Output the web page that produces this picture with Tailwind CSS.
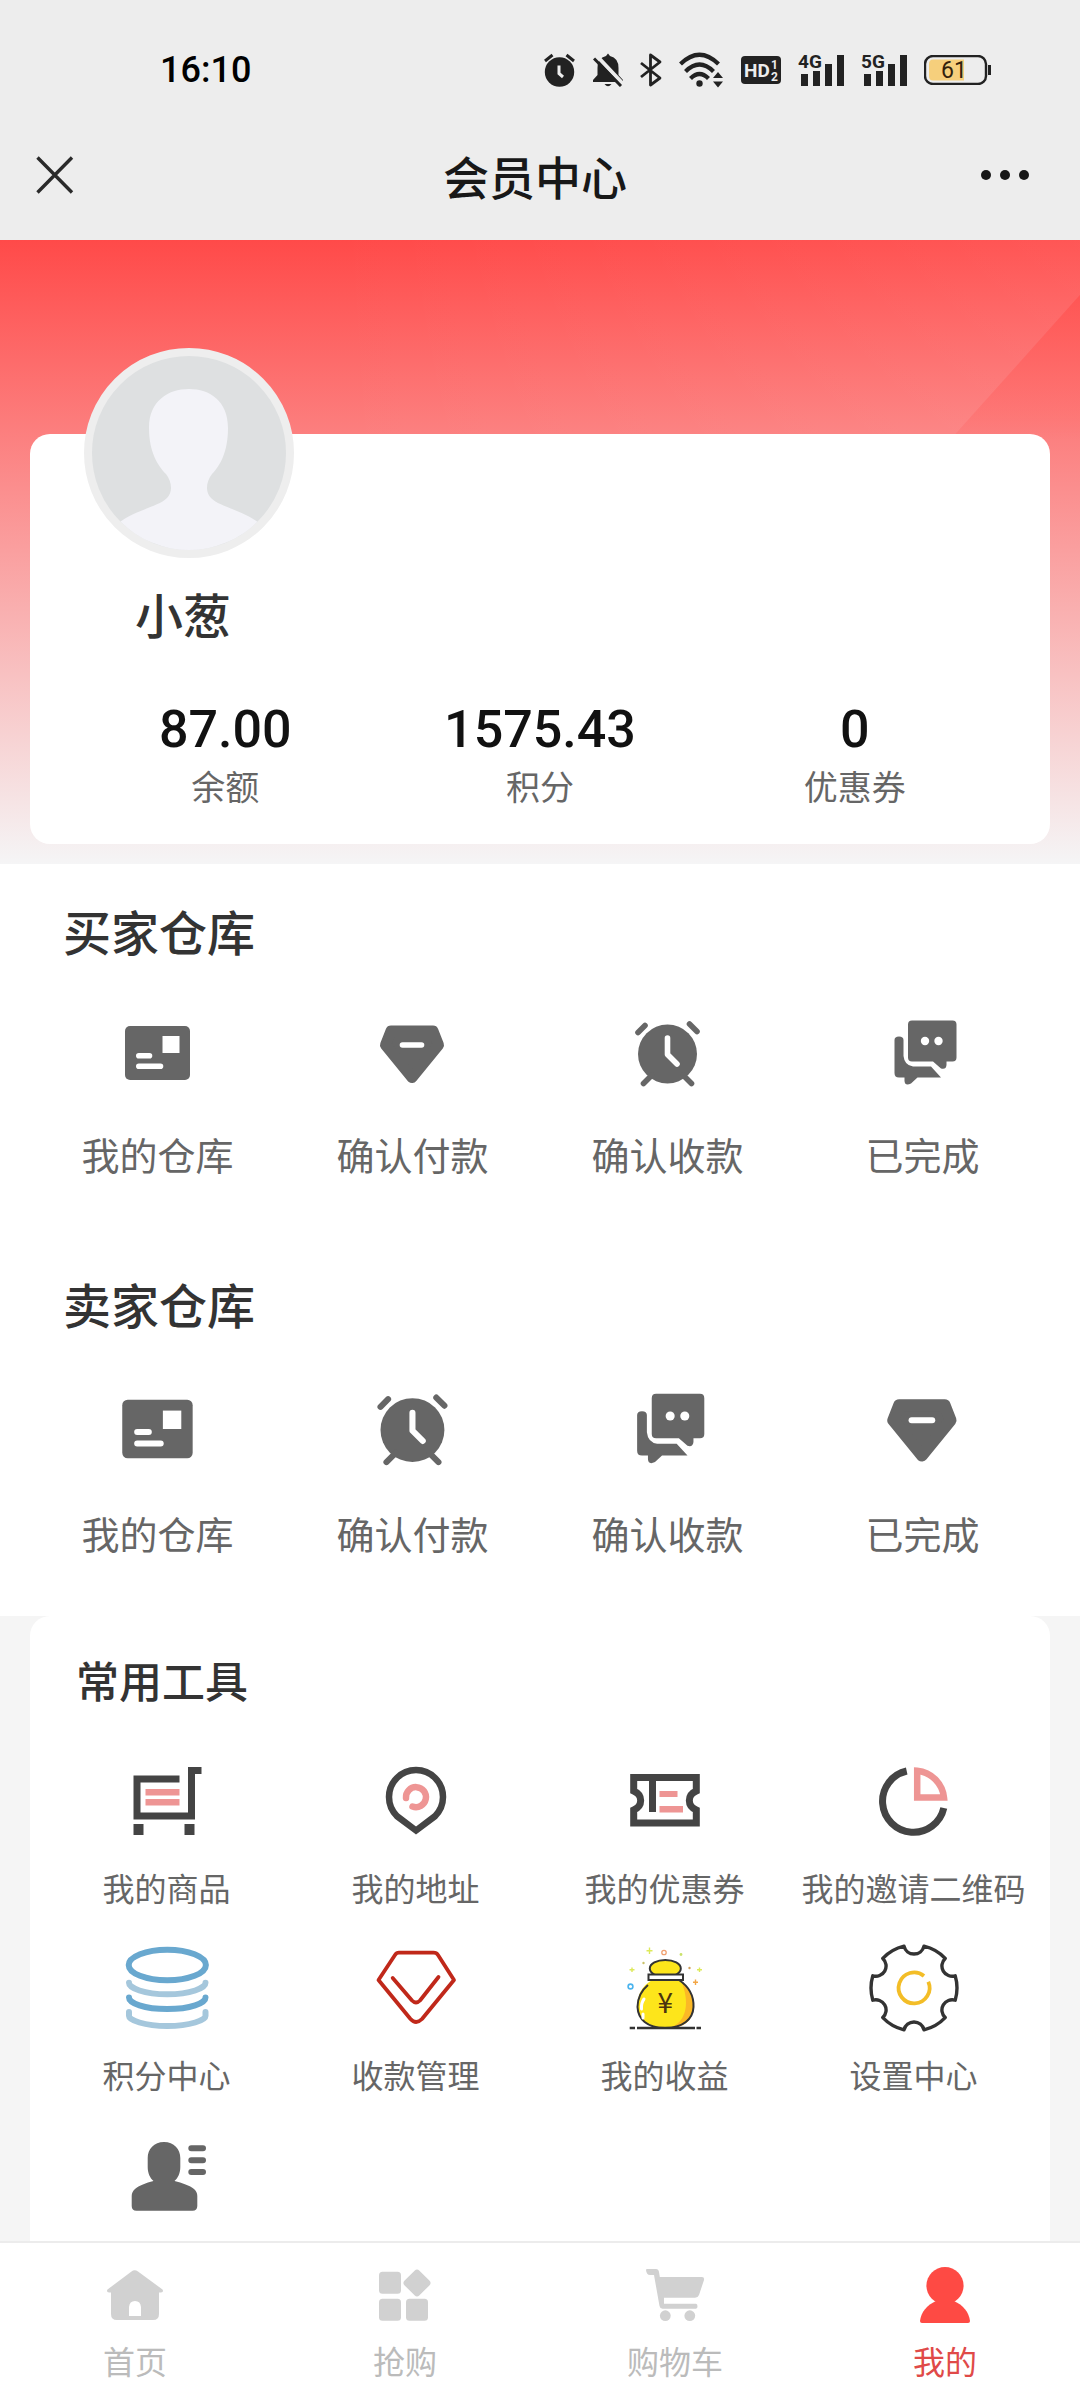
<!DOCTYPE html>
<html lang="zh-CN">
<head>
<meta charset="utf-8">
<meta name="viewport" content="width=device-width, initial-scale=1">
<title>会员中心</title>
<script src="https://cdn.jsdelivr.net/npm/@tailwindcss/browser@4"></script>
</head>
<body class="flex min-h-screen flex-col bg-white font-['Noto_Sans_CJK_SC',sans-serif] text-[#666]">

<!-- Shared icons -->
<svg class="hidden" aria-hidden="true">
  <symbol id="i-card" viewBox="0 0 72 72">
    <rect x="3" y="9" width="65" height="54" rx="5" fill="#666"/>
    <path d="M40.500 19h17v17h-17z" fill="#fff"/>
    <path d="M16.800 38.800H27.500M16.800 49.300H38.500" stroke="#fff" stroke-width="5.600" stroke-linecap="round"/>
  </symbol>
  <symbol id="i-gem" viewBox="0 0 72 72">
    <path d="M14 14H56L61.500 28L35 60.500L8.500 28Z" fill="#666" stroke="#666" stroke-width="11" stroke-linejoin="round"/>
    <path d="M25.500 28H44.500" stroke="#fff" stroke-width="5.600" stroke-linecap="round"/>
  </symbol>
  <symbol id="i-clock" viewBox="0 0 72 72">
    <circle cx="35.500" cy="37" r="29.500" fill="#666"/>
    <g fill="none" stroke="#666" stroke-width="5.600" stroke-linecap="round"><path d="M6 15.500L13 8.500M57.500 7L65 14.500M11.500 66.500L20 58M59.500 66.500L51 58"/></g>
    <path d="M35.500 21V37.500L45 47" fill="none" stroke="#fff" stroke-width="5.600" stroke-linecap="round" stroke-linejoin="round"/>
  </symbol>
  <symbol id="i-chat" viewBox="0 0 72 72">
    <path d="M25 3.500H65.500Q69.500 3.500 69.500 7.500V40.500Q69.500 44.500 65.500 44.500H59.500V48Q59 53 54 51.500L46 44.500H25Q21 44.500 21 40.500V7.500Q21 3.500 25 3.500Z" fill="#666"/>
    <circle cx="38" cy="24" r="4.200" fill="#fff"/><circle cx="51.500" cy="24" r="4.200" fill="#fff"/>
    <path d="M7.500 23Q7.500 19.500 12 19.500T16.500 23V39Q17.500 48.500 26 49.500H44L54 60.500H30.500L24 66.500Q18 69.500 17.500 64V60.500H12Q7.500 60.500 7.500 56Z" fill="#666"/>
  </symbol>
</svg>

<header class="bg-[#ededed] text-black">
  <div class="flex h-[126px] items-center justify-between pt-[14px] pr-[89px] pl-[160px]">
    <time class="font-['Roboto',sans-serif] text-[36px] font-medium">16:10</time>
    <div class="flex items-center gap-[17px]">
      <svg class="h-[34px] w-[32px]" viewBox="0 0 32 34" role="img" aria-label="闹钟"><circle cx="15.500" cy="19" r="14.700" fill="#222"/><path d="M1 8L8.500 2M30 8L22.500 2" stroke="#222" stroke-width="3"/><path d="M15 12.500V20.500L19 24" fill="none" stroke="#ededed" stroke-width="3"/></svg>
      <svg class="h-[34px] w-[30px]" viewBox="0 0 30 34" role="img" aria-label="静音"><path d="M15 0.500L17 3Q25.500 5 25.500 15V22L30 27V29H0V27L4.500 22V15Q4.500 5 13 3Z" fill="#222"/><path d="M11.500 31H18.500Q15 35.500 11.500 31Z" fill="#222"/><path d="M3 2L31 32" stroke="#ededed" stroke-width="4"/><path d="M1 5.500L28 33" stroke="#222" stroke-width="3"/></svg>
      <svg class="h-[34px] w-[22px]" viewBox="0 0 22 34" role="img" aria-label="蓝牙"><path d="M1 10L20 25L10.500 32V2L20 9L1 24" fill="none" stroke="#222" stroke-width="2.800" stroke-linejoin="round"/></svg>
      <svg class="h-[36px] w-[45px]" viewBox="0 0 45 36" role="img" aria-label="无线网络"><g fill="none" stroke="#222" stroke-width="4.200"><path d="M1.500 12Q20.500 -6.500 39.500 12M6.500 19.500Q20.500 5.500 34.500 19.500M11.500 26.500Q20.500 17.500 29.500 26.500"/></g><circle cx="20.500" cy="31.500" r="3.200" fill="#222"/><path d="M34 26L39 20L44 26ZM34 29.500H44L39 35.500Z" fill="#222"/></svg>
      <svg class="h-[28px] w-[40px]" viewBox="0 0 40 28"><rect width="40" height="28" rx="4" fill="#222"/><g fill="#ededed" font-family="Roboto" font-weight="700"><text x="3" y="21" font-size="19">HD</text><text x="30" y="13" font-size="12">1</text><text x="30" y="25" font-size="12">2</text></g></svg>
      <svg class="h-[46px] w-[46px]" viewBox="0 -6 46 46"><text x="0" y="15" font-family="Roboto" font-weight="700" font-size="19" fill="#222">4G</text><path d="M3 21h7v12H3zM15 18h7v15h-7zM27 11h7v22h-7zM39 2h7v31h-7z" fill="#222"/></svg>
      <svg class="h-[46px] w-[46px]" viewBox="0 -6 46 46"><text x="0" y="15" font-family="Roboto" font-weight="700" font-size="19" fill="#222">5G</text><path d="M3 21h7v12H3zM15 18h7v15h-7zM27 11h7v22h-7zM39 2h7v31h-7z" fill="#222"/></svg>
      <svg class="h-[30px] w-[67px]" viewBox="0 0 67 30"><rect x="1" y="1" width="61" height="28" rx="8" fill="none" stroke="#222" stroke-width="2.400"/><path d="M9 4.500H40V25.500H9Q5 25.500 5 21V9Q5 4.500 9 4.500Z" fill="#f6cf7c"/><path d="M64 10h3v10h-3z" fill="#222"/><text x="30" y="23" text-anchor="middle" font-family="Roboto" font-size="23" fill="#33220c">61</text></svg>
    </div>
  </div>
  <div class="grid h-[114px] grid-cols-[1fr_auto_1fr] items-center pr-[46px] pb-4 pl-[36px]">
    <button type="button" aria-label="关闭"><svg class="size-[38px]" viewBox="0 0 38 38"><path d="M1.500 1.500L36 36.500M36 1.500L1.500 36.500" stroke="#2a2a2a" stroke-width="3.400"/></svg></button>
    <h1 class="text-[46px] leading-none font-medium text-[#181818]">会员中心</h1>
    <button type="button" aria-label="更多" class="justify-self-end pr-1"><svg class="h-3 w-[50px]" viewBox="0 0 50 12"><circle cx="6" cy="6" r="5" fill="#181818"/><circle cx="25" cy="6" r="5" fill="#181818"/><circle cx="44" cy="6" r="5" fill="#181818"/></svg></button>
  </div>
</header>

<main class="flex grow flex-col">
  <section class="relative bg-linear-to-b/srgb from-[#ff4a49] to-[#f5f5f6] px-[30px] pt-[194px] pb-5">
    <svg class="absolute inset-x-0 top-0 h-[200px] w-full" viewBox="0 0 1080 200" preserveAspectRatio="none" aria-hidden="true">
      <defs>
        <linearGradient id="glow" x1="0.300" x2="1"><stop offset="0" stop-color="#fff" stop-opacity="0"/><stop offset="1" stop-color="#fff" stop-opacity="0.070"/></linearGradient>
        <linearGradient id="fold" x1="0" y1="1" x2="0" y2="0"><stop offset="0" stop-color="#ff6e6c" stop-opacity="0"/><stop offset="0.200" stop-color="#ff6e6c" stop-opacity="0.400"/><stop offset="1" stop-color="#ff5553"/></linearGradient>
      </defs>
      <path d="M0 0H1080V55L950 200H0Z" fill="url(#glow)"/>
      <path d="M1080 55V200H950Z" fill="url(#fold)" fill-opacity="0.800"/>
    </svg>
    <div class="relative rounded-[20px] bg-white pt-[149px] pb-[33px]">
      <div class="absolute -top-[86px] left-[54px] size-[210px] overflow-hidden rounded-full border-8 border-[#eeeeee] bg-[#dee0e1]">
        <svg class="size-full" viewBox="0 0 194 194" role="img" aria-label="头像"><path d="M97 33C118 33 136 45 136 72C136 96 128 110 120 118C114 126 113 136 119 142C128 151 148 153 169 168V194H25V168C45 153 66 151 75 142C81 136 80 126 74 118C66 110 57 96 57 72C57 45 76 33 97 33Z" fill="#f3f3f8"/></svg>
      </div>
      <h2 class="pl-[105px] text-[48px] leading-[60px] font-medium text-[#333]">小葱</h2>
      <dl class="mx-[38px] mt-14 grid grid-cols-3 text-center">
        <div class="flex flex-col-reverse"><dt class="text-[34px] leading-[50px]">余额</dt><dd class="font-['Roboto',sans-serif] text-[52px] leading-[62px] font-medium text-[#111]">87.00</dd></div>
        <div class="flex flex-col-reverse"><dt class="text-[34px] leading-[50px]">积分</dt><dd class="font-['Roboto',sans-serif] text-[52px] leading-[62px] font-medium text-[#111]">1575.43</dd></div>
        <div class="flex flex-col-reverse"><dt class="text-[34px] leading-[50px]">优惠券</dt><dd class="font-['Roboto',sans-serif] text-[52px] leading-[62px] font-medium text-[#111]">0</dd></div>
      </dl>
    </div>
  </section>

  <section class="px-[30px] pt-9 pb-[58px]">
    <h2 class="pl-[33px] text-[48px] leading-[60px] font-medium text-[#333]">买家仓库</h2>
    <div class="mt-[57px] grid grid-cols-4 text-[38px] leading-[50px]">
      <a href="#" class="flex flex-col items-center gap-10"><svg class="size-[72px]"><use href="#i-card"/></svg>我的仓库</a>
      <a href="#" class="flex flex-col items-center gap-10"><svg class="size-[72px]"><use href="#i-gem"/></svg>确认付款</a>
      <a href="#" class="flex flex-col items-center gap-10"><svg class="size-[72px]"><use href="#i-clock"/></svg>确认收款</a>
      <a href="#" class="flex flex-col items-center gap-10"><svg class="size-[72px]"><use href="#i-chat"/></svg>已完成</a>
    </div>
  </section>

  <section class="px-[30px] pt-9 pb-[58px]">
    <h2 class="pl-[33px] text-[48px] leading-[60px] font-medium text-[#333]">卖家仓库</h2>
    <div class="mt-[57px] grid grid-cols-4 text-[38px] leading-[50px]">
      <a href="#" class="flex flex-col items-center gap-10"><svg class="size-[78px]"><use href="#i-card"/></svg>我的仓库</a>
      <a href="#" class="flex flex-col items-center gap-10"><svg class="size-[78px]"><use href="#i-clock"/></svg>确认付款</a>
      <a href="#" class="flex flex-col items-center gap-10"><svg class="size-[78px]"><use href="#i-chat"/></svg>确认收款</a>
      <a href="#" class="flex flex-col items-center gap-10"><svg class="size-[78px]"><use href="#i-gem"/></svg>已完成</a>
    </div>
  </section>

  <section class="flex grow flex-col bg-[#f5f5f5] px-[30px]">
    <div class="grow rounded-t-[20px] bg-white px-3 pt-[38px]">
      <h2 class="pl-[34px] text-[43px] leading-[50px] font-medium text-[#333]">常用工具</h2>
      <div class="mt-[52px] grid grid-cols-4 gap-y-9 text-[32px] leading-[40px] whitespace-nowrap">
        <a href="#" class="flex flex-col items-center gap-[21px]">
          <svg class="size-[90px]" viewBox="0 0 90 90"><path d="M57.500 23H15V60H69.500V14.500H79.500" fill="none" stroke="#444" stroke-width="7"/><path d="M11.500 68h10v11h-10zM62.500 68h10v11h-10z" fill="#444"/><path d="M23.500 33h34v6.500h-34zM23.500 43h34v6.500h-34z" fill="#ee9594"/></svg>我的商品</a>
        <a href="#" class="flex flex-col items-center gap-[21px]">
          <svg class="size-[90px]" viewBox="0 0 90 90"><path d="M45 74.500L26 60.200A27 27 0 1 1 64 60.200Z" fill="none" stroke="#444" stroke-width="6.500"/><path d="M35 42A10 10 0 1 1 41.500 50.500" fill="none" stroke="#ee9594" stroke-width="6.500" stroke-linecap="round"/></svg>我的地址</a>
        <a href="#" class="flex flex-col items-center gap-[21px]">
          <svg class="size-[90px]" viewBox="0 0 90 90"><path d="M13.700 21.500H76.300V35C67 39 67 50 76.300 54V67H13.700V54C23 50 23 39 13.700 35Z" fill="none" stroke="#444" stroke-width="7"/><path d="M29 24h7v32h-7z" fill="#444"/><path d="M39.500 35h18v6h-18zM39.500 50h23.500v6.500H39.500z" fill="#ee9594"/></svg>我的优惠券</a>
        <a href="#" class="flex flex-col items-center gap-[21px]">
          <svg class="size-[90px]" viewBox="0 0 90 90"><path d="M37.700 15A31 31 0 1 0 74.800 52" fill="none" stroke="#444" stroke-width="7"/><path d="M48.200 14.800V41.500H75A30 30 0 0 0 48.200 14.800Z" fill="none" stroke="#ee9594" stroke-width="6.500"/></svg>我的邀请二维码</a>
        <a href="#" class="flex flex-col items-center gap-[21px]">
          <svg class="size-[90px]" viewBox="0 0 90 90"><g fill="none" stroke-width="6" stroke-linecap="round"><ellipse cx="45.300" cy="22" rx="38.600" ry="15.300" stroke="#69a8cf"/><path d="M7 39.700C7 45 22 51.300 45.300 51.300S83.500 45 83.500 39.700" stroke="#a5c7dc"/><path d="M7 54.400C7 60 22 66 45.300 66S83.500 60 83.500 54.400" stroke="#69a8cf"/><path d="M7 69V73C7 77 22 83 45.300 83S83.500 77 83.500 73V69" stroke="#a5c7dc"/></g></svg>积分中心</a>
        <a href="#" class="flex flex-col items-center gap-[21px]">
          <svg class="size-[90px]" viewBox="0 0 90 90"><g fill="none" stroke="#c0281a" stroke-width="3.800" stroke-linecap="round" stroke-linejoin="round"><path d="M28 9.700H62.500Q65.500 9.700 67 12L83 37L51 76Q45 82 39.500 76L7.500 37L24 12Q25.500 9.700 28 9.700Z"/><path d="M21.700 35L41 57.500Q45 61.500 49 57.500L67.500 34"/></g></svg>收款管理</a>
        <a href="#" class="flex flex-col items-center gap-[21px]">
          <svg class="size-[90px]" viewBox="0 0 90 90">
            <path d="M32 37C22 43 17 52 17.500 64C18 76 27 85 45 85S73 76 73.500 64C74 52 68 43 59 37Z" fill="#fde51b"/>
            <path d="M62 40C71 47 75 57 73 68C71 80 61 85 50 85C64 80 71 64 62 40Z" fill="#fbb826"/>
            <path d="M28 42C22 47 17.500 54 17.500 64C18 76 27 85 45 85S73 76 73.500 64C74 52 68 43 59 37H33" fill="none" stroke="#333" stroke-width="2"/>
            <path d="M24 56Q21 60 21.500 66M23 71V75" stroke="#fff" stroke-width="3" fill="none" stroke-linecap="round"/>
            <ellipse cx="45.300" cy="25.500" rx="15.500" ry="8.500" fill="#fde51b" stroke="#333" stroke-width="2"/>
            <path d="M28.500 31.500h34.500v5.500H28.500z" fill="#fff" stroke="#333" stroke-width="2"/>
            <text x="45.300" y="70" text-anchor="middle" font-family="Noto Sans CJK SC" font-size="28" fill="#4a3310">¥</text>
            <path d="M9.700 85H15M17 85H75M76.500 85H81" stroke="#333" stroke-width="2.600"/>
            <circle cx="44" cy="9.500" r="2.200" fill="none" stroke="#f0a070" stroke-width="1.300"/><circle cx="10.500" cy="43.500" r="2.400" fill="none" stroke="#4bb4ee" stroke-width="1.600"/>
            <path d="M29.500 4.500V11M26.500 7.700H32.500M12 24.500V29M9.500 26.700H14.500M79.500 24.500V29M77 26.700H82" stroke="#dde95a" stroke-width="1.400"/><path d="M75.500 36.500V42M73 39.200H78" stroke="#f2a545" stroke-width="1.400"/>
            <circle cx="61" cy="11.500" r="1.400" fill="#c9e26a"/><circle cx="23.500" cy="20" r="1.200" fill="#c9c26a"/><circle cx="69.500" cy="25" r="1.200" fill="#d0a05a"/>
          </svg>我的收益</a>
        <a href="#" class="flex flex-col items-center gap-[21px]">
          <svg class="size-[90px]" viewBox="0 0 90 90"><path d="M55 3.200A43 43 0 0 1 76.200 15.400A10.300 10.300 0 0 0 86.200 32.800A43 43 0 0 1 86.200 57.200A10.300 10.300 0 0 0 76.200 74.600A43 43 0 0 1 55 86.800A10.300 10.300 0 0 0 35 86.800A43 43 0 0 1 13.800 74.600A10.300 10.300 0 0 0 3.800 57.200A43 43 0 0 1 3.800 32.800A10.300 10.300 0 0 0 13.800 15.400A43 43 0 0 1 35 3.200A10.300 10.300 0 0 0 55 3.200Z" fill="none" stroke="#333" stroke-width="3.400" stroke-linejoin="round"/><path d="M59.300 38.700A15.500 15.500 0 1 1 55 33" fill="none" stroke="#f3bd27" stroke-width="3.800"/></svg>设置中心</a>
        <a href="#" class="flex flex-col items-center" aria-label="个人资料">
          <svg class="size-[90px]" viewBox="0 0 90 90"><path d="M42 12C52 12 58.300 19 58.300 28V37C58.300 43 56 48 52.500 51C60 53 68 55.500 72 59Q75.300 62 75.300 66V76Q75.300 80.700 70.500 80.700H14.500Q9.700 80.700 9.700 76V66Q9.700 62 13 59C17 55.500 24 53 31.500 51C28 48 25.700 43 25.700 37V28C25.700 19 32 12 42 12Z" fill="#666"/><path d="M69.300 18.300H81M69.300 30.300H81M69.300 42H81" stroke="#666" stroke-width="6" stroke-linecap="round"/></svg></a>
      </div>
    </div>
  </section>
</main>

<nav class="sticky bottom-0 grid grid-cols-4 border-t-2 border-[#ececec] bg-white pt-[22px] pb-5 text-[32px] leading-[40px] text-[#bbb]">
  <a href="#" class="flex flex-col items-center gap-[15px]"><svg class="size-[60px]" viewBox="0 0 60 60"><path d="M26.500 6.500Q29.600 4 33 6.500L57.500 24.500Q59 27 56 27.500H54V49Q54 55 48 55H12Q6 55 6 49V27.500H4Q1 27 2.500 24.500Z" fill="#d1d1d1"/><path d="M24 51V42Q24.500 36 30 36T36 42V51Z" fill="#fff"/></svg>首页</a>
  <a href="#" class="flex flex-col items-center gap-[15px]"><svg class="size-[60px]" viewBox="0 0 60 60" fill="#d1d1d1"><rect x="4" y="6.700" width="22" height="22" rx="3.500"/><rect x="4" y="33.700" width="22" height="22" rx="3.500"/><rect x="31" y="33.700" width="22" height="22" rx="3.500"/><rect x="31.500" y="7.500" width="21" height="21" rx="3.500" transform="rotate(45 42 18)"/></svg>抢购</a>
  <a href="#" class="flex flex-col items-center gap-[15px]"><svg class="size-[60px]" viewBox="0 0 60 60" fill="#d1d1d1"><path d="M2 4H11Q13.500 4 14 7L14.800 12H57Q59.500 12 59 15L54 30Q53 32.700 50 32.700H19V38.700H51Q52.500 39 52.500 41.200T51 43.700H17.500Q15 43.700 14.500 41L9 10H5Q1.500 10 1 5Q1 4 2 4Z"/><circle cx="20.300" cy="50.700" r="5.400"/><circle cx="44.800" cy="50.700" r="5.400"/></svg>购物车</a>
  <a href="#" aria-current="page" class="flex flex-col items-center gap-[15px] text-[#e04a48]"><svg class="size-[60px]" viewBox="0 0 60 60" fill="#fe4a44"><circle cx="30" cy="20.700" r="18.600"/><path d="M21 36H39C48 40 54 47 55 56Q55 58 53 58H7Q5 58 5 56C6 47 12 40 21 36Z"/></svg>我的</a>
</nav>
</body>
</html>
